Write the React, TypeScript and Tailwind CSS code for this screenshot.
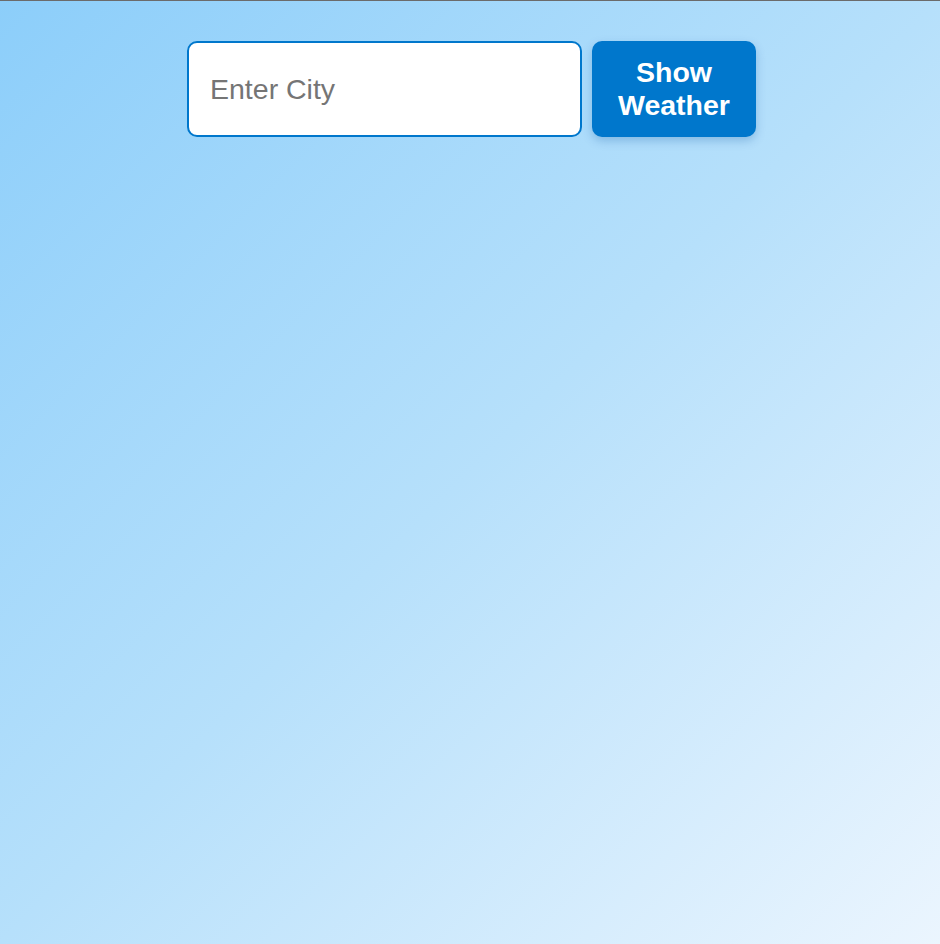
import { useState } from 'react';

export default function App() {
  const [city, setCity] = useState('');

  return (
    <div className="min-h-[944px] w-full border-t border-[#6b6b6b] bg-gradient-to-br from-[#8ccefa] via-[#b6e0fb] to-[#ebf5fe] font-['Liberation_Sans',Arial,sans-serif]">
      <div className="flex justify-center gap-[10px] pt-10 pl-[3px]">
        <input
          type="text"
          value={city}
          onChange={(e) => setCity(e.target.value)}
          placeholder="Enter City"
          className="h-[96px] w-[395px] rounded-[10px] border-2 border-[#0077cc] bg-white px-[21px] text-[28.5px] text-[#333] outline-none placeholder:text-[#757575]"
        />
        <button className="h-[96px] w-[164px] rounded-[10px] bg-[#0077cc] text-[28.5px] font-bold leading-[33px] text-white shadow-[0_4px_10px_rgba(0,80,160,0.25)]">
          Show
          <br />
          Weather
        </button>
      </div>
    </div>
  );
}
